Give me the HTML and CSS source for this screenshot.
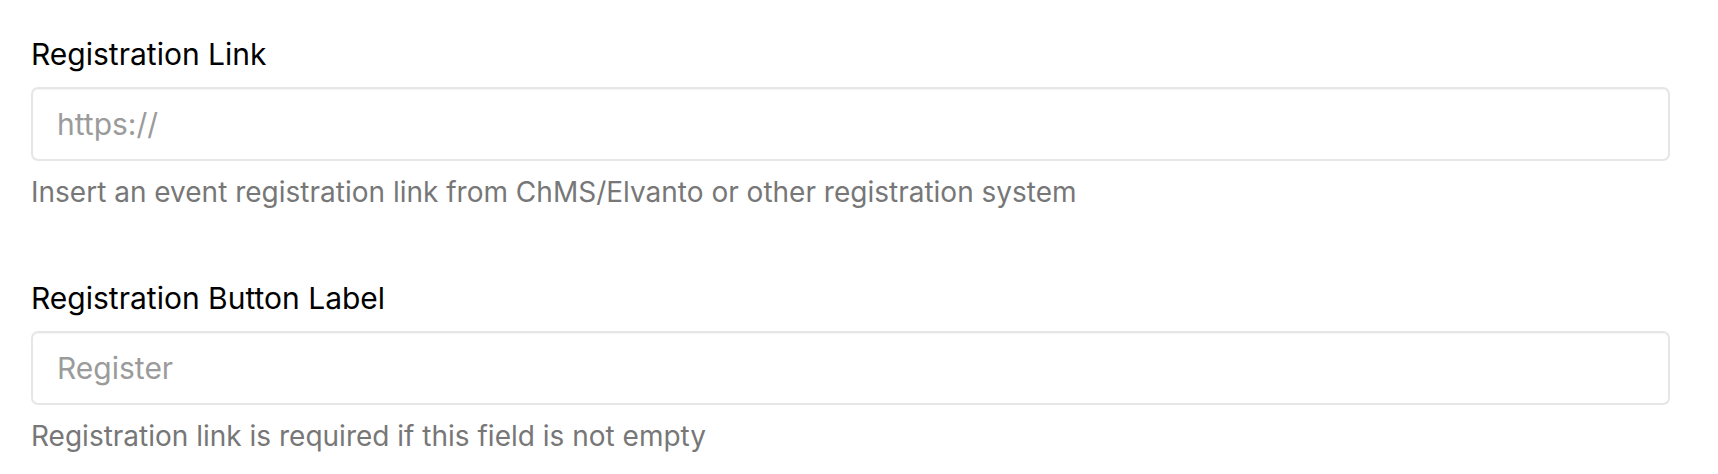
FILE: index.html
```html
<!DOCTYPE html>
<html lang="en">
<head>
    <meta charset="UTF-8">
    <meta name="viewport" content="width=device-width, initial-scale=1.0">
    <title>Registration</title>
    <link rel="stylesheet" href="styles.css">
</head>
<body>
    <form class="reg-form">
        <div class="field">
            <label for="regLink">Registration Link</label>
            <input type="url" id="regLink" placeholder="https://">
            <div class="hint">Insert an event registration link from ChMS/Elvanto or other registration system</div>
        </div>

        <div class="field">
            <label for="regLabel">Registration Button Label</label>
            <input type="text" id="regLabel" placeholder="Register">
            <div class="hint">Registration link is required if this field is not empty</div>
        </div>
    </form>
</body>
</html>
```

FILE: styles.css
```css
body {
    margin: 0;
    font-family: Inter, "Noto Sans", sans-serif;
    background: #fff;
    color: #000;
}

.reg-form {
    padding: 34px 48px 0 31px;
}

.field {
    margin-bottom: 66px;
}

.field:last-child {
    margin-bottom: 0;
}

.field label {
    display: block;
    font-size: 30px;
    line-height: 40px;
    margin-bottom: 13px;
}

.field input {
    display: block;
    box-sizing: border-box;
    width: 100%;
    height: 74px;
    padding: 0 24px;
    font-family: inherit;
    font-size: 30px;
    color: #222;
    border: 2px solid #e6e6e6;
    border-radius: 7px;
    box-shadow: inset 0 1px 1px rgba(0, 0, 0, 0.04);
    outline: none;
}

.field input::placeholder {
    color: #9b9b9b;
}

.hint {
    margin-top: 11px;
    font-size: 28px;
    line-height: 40px;
    color: #777;
}
```
